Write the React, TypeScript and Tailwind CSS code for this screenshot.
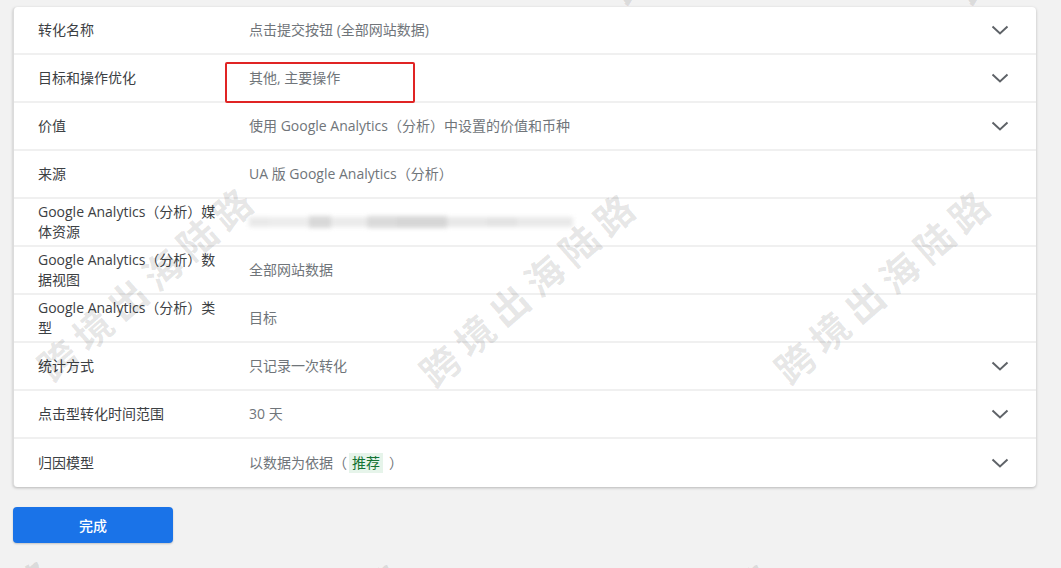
import React from "react";

const rows: { label: string; value: React.ReactNode; chevron: boolean }[] = [
  { label: "转化名称", value: "点击提交按钮 (全部网站数据)", chevron: true },
  { label: "目标和操作优化", value: "其他, 主要操作", chevron: true },
  { label: "价值", value: "使用 Google Analytics（分析）中设置的价值和币种", chevron: true },
  { label: "来源", value: "UA 版 Google Analytics（分析）", chevron: false },
  { label: "Google Analytics（分析）媒体资源", value: "__blur__", chevron: false },
  { label: "Google Analytics（分析）数据视图", value: "全部网站数据", chevron: false },
  { label: "Google Analytics（分析）类型", value: "目标", chevron: false },
  { label: "统计方式", value: "只记录一次转化", chevron: true },
  { label: "点击型转化时间范围", value: "30 天", chevron: true },
  { label: "归因模型", value: "__attr__", chevron: true },
];

function Chevron() {
  return (
    <svg width="24" height="24" viewBox="0 0 24 24" className="block">
      <polyline points="4.5,8.5 12,15.5 19.5,8.5" fill="none" stroke="#5f6368" strokeWidth="2" />
    </svg>
  );
}

function BlurValue() {
  return (
    <div className="flex items-center h-[14px] blur-[2px] opacity-80">
      <div className="w-[20px] h-[10px] bg-[#e4e4e4]" />
      <div className="w-[40px] h-[10px] bg-[#e8e8e8]" />
      <div className="w-[22px] h-[12px] bg-[#cfcfcf]" />
      <div className="w-[36px] h-[10px] bg-[#e6e6e6]" />
      <div className="w-[30px] h-[12px] bg-[#d2d2d2]" />
      <div className="w-[50px] h-[12px] bg-[#cccccc]" />
      <div className="w-[40px] h-[10px] bg-[#e2e2e2]" />
      <div className="w-[30px] h-[10px] bg-[#dcdcdc]" />
      <div className="w-[56px] h-[10px] bg-[#e4e4e4]" />
    </div>
  );
}

function AttrValue() {
  return (
    <span className="inline-flex items-center">
      以数据为依据（
      <span className="bg-[#e6f4ea] text-[#137333] px-[3px] mx-[2px] leading-[20px]">推荐</span>
      <span className="ml-[4px]">）</span>
    </span>
  );
}

const marks: [number, number][] = [
  [720, -95],
  [1065, -95],
  [148, 282],
  [530, 288],
  [885, 285],
  [-50, 655],
  [300, 658],
  [670, 658],
];

export default function App() {
  return (
    <div
      className="relative w-[1061px] h-[568px] overflow-hidden bg-[#f2f2f2]"
      style={{ fontFamily: '"Open Sans", "Noto Sans CJK SC", sans-serif' }}
    >
      <div className="pt-[7px] pl-[13px] pr-[25px]">
        <div className="bg-white rounded-[4px] shadow-[0_1px_3px_rgba(0,0,0,0.25)] border-l border-[#dcdcdc] overflow-hidden">
          {rows.map((r, i) => (
            <div
              key={i}
              className={`flex items-center h-[48px] pl-[24px] pr-[24px] ${
                i < rows.length - 1 ? "border-b-2 border-[#f0f0f0]" : ""
              }`}
            >
              <div className="w-[190px] shrink-0 text-[14px] leading-[20px] text-[#3c4043]">{r.label}</div>
              <div className="ml-[21px] flex-1 text-[14px] leading-[20px] text-[#70757a]">
                {r.value === "__blur__" ? <BlurValue /> : r.value === "__attr__" ? <AttrValue /> : r.value}
              </div>
              <div className="w-[24px] h-[24px]">{r.chevron ? <Chevron /> : null}</div>
            </div>
          ))}
        </div>
        <button className="mt-[20px] w-[160px] h-[36px] rounded-[4px] bg-[#1a73e8] text-white text-[14px] font-medium shadow-[0_1px_2px_rgba(0,0,0,0.2)]">
          完成
        </button>
      </div>

      <div className="absolute left-[225px] top-[62px] w-[190px] h-[41px] border-2 border-[#e02424] rounded-[2px] pointer-events-none" />

      {marks.map(([x, y], i) => (
        <div
          key={i}
          className="absolute pointer-events-none whitespace-nowrap font-bold text-[38px] tracking-[8px] text-[rgba(0,0,0,0.1)]"
          style={{ left: x, top: y, transform: "translate(-50%, -50%) rotate(-41deg)" }}
        >
          跨境出海陆路
        </div>
      ))}
    </div>
  );
}
